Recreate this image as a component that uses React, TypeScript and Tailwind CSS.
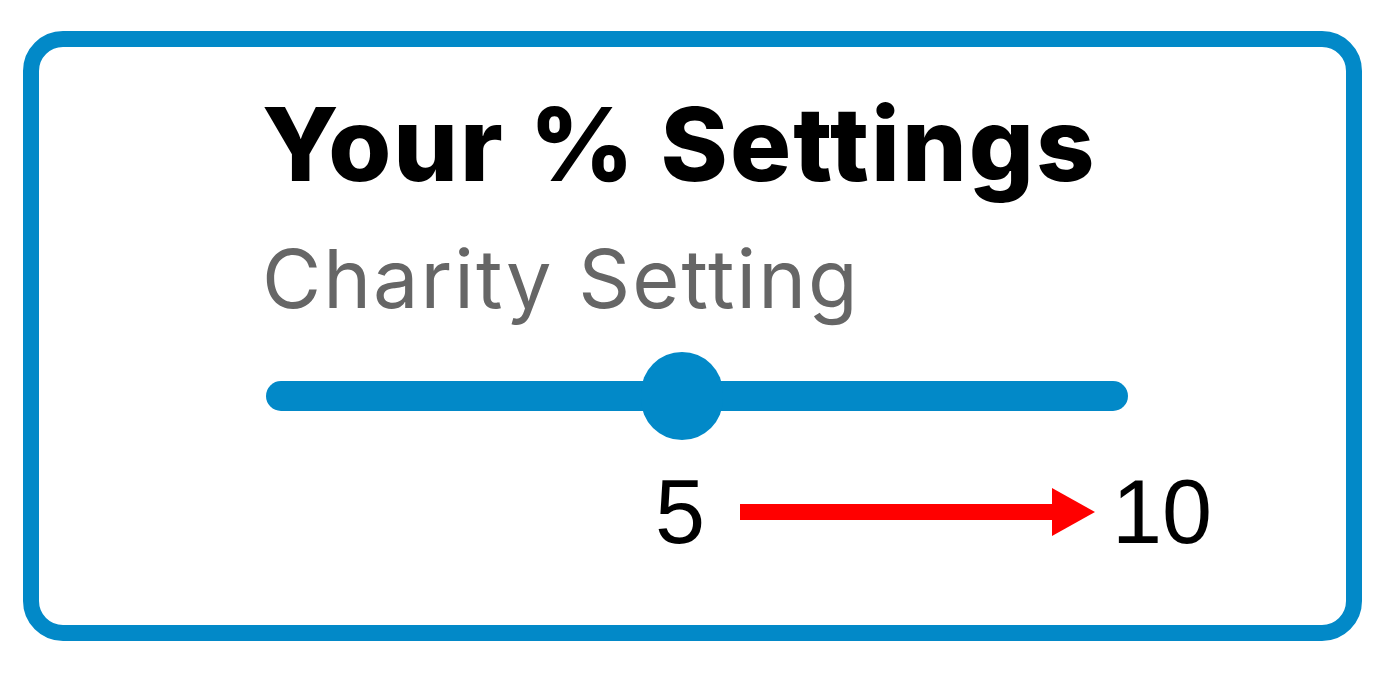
export default function App() {
  return (
    <div className="min-h-screen bg-white pl-[23px] pt-[31px]">
      <div className="w-[1339px] h-[610px] border-[16px] border-[#0289c8] rounded-[40px] bg-white pl-[223px] pt-[46px] font-['Inter',sans-serif]">
        <h1 className="text-[102px] leading-none font-extrabold tracking-[2px] text-black">Your % Settings</h1>
        <p className="mt-[44px] text-[81px] leading-none font-normal tracking-[2px] text-[#666666]">Charity Setting</p>

        {/* slider */}
        <div className="mt-[32px] ml-[4px] relative w-[862px] h-[88px] flex items-center">
          <div className="w-full h-[30px] rounded-full bg-[#0289c8]" />
          <div className="absolute left-[375px] top-0 w-[82px] h-[88px] rounded-full bg-[#0289c8]" />
        </div>

        <div className="mt-[27px] ml-[393px] flex items-center font-['Liberation_Sans',Arial,sans-serif] text-[90px] leading-none text-black">
          <span>5</span>
          <svg className="ml-[35px] mr-[17px]" width="355" height="48" viewBox="0 0 355 48">
            <rect x="0" y="16" width="314" height="16" fill="#ff0000" />
            <polygon points="312,0 355,24 312,48" fill="#ff0000" />
          </svg>
          <span>10</span>
        </div>
      </div>
    </div>
  );
}
